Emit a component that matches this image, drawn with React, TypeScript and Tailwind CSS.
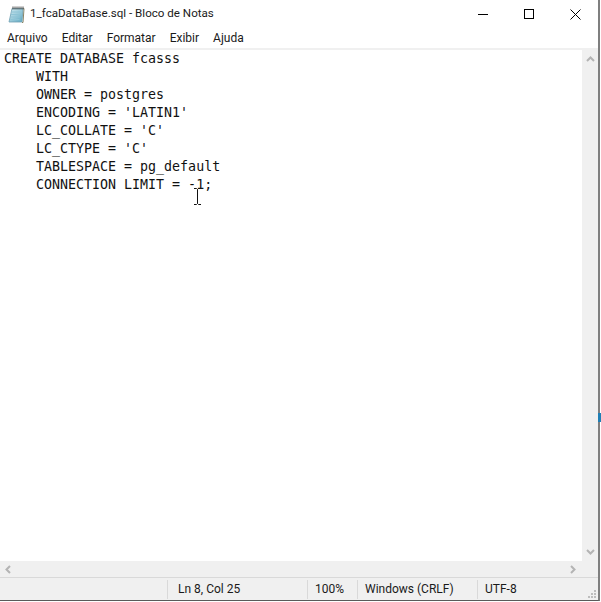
const CODE = [
  "CREATE DATABASE fcasss",
  "    WITH",
  "    OWNER = postgres",
  "    ENCODING = 'LATIN1'",
  "    LC_COLLATE = 'C'",
  "    LC_CTYPE = 'C'",
  "    TABLESPACE = pg_default",
  "    CONNECTION LIMIT = -1;",
]

const MENU = ["Arquivo", "Editar", "Formatar", "Exibir", "Ajuda"]

function NotepadIcon() {
  return (
    <svg width="17" height="17" viewBox="0 0 17 17" aria-hidden="true">
      <defs>
        <linearGradient id="pad" x1="0" y1="0" x2="1" y2="1">
          <stop offset="0" stopColor="#d6edf3" />
          <stop offset="1" stopColor="#5fa9c2" />
        </linearGradient>
      </defs>
      <path d="M4.5 2.5h11.5l-1 14h-1" fill="none" stroke="#8a8464" />
      <path d="M4 2.5h11l-1 13.5H1z" fill="url(#pad)" stroke="#6f9fb2" strokeWidth="0.8" />
      <path d="M3.5 6h9M3 8.5h9M2.8 11h9M2.5 13.5h9" stroke="#8fc4d6" />
      <path d="M5 .5v3M7 .5v3M9 .5v3M11 .5v3M13 .5v3M15 .5v3" stroke="#4a4a4a" />
    </svg>
  )
}

function Chevron({ d }: { d: string }) {
  return (
    <svg width="9" height="9" viewBox="0 0 9 9" aria-hidden="true">
      <path d={d} fill="none" stroke="#b4b4b4" strokeWidth="2" />
    </svg>
  )
}

function SizeGrip() {
  return (
    <svg width="10" height="10" viewBox="0 0 10 10" aria-hidden="true">
      <path d="M7 1h2v2H7zM4 4h2v2H4zM7 4h2v2H7zM1 7h2v2H1zM4 7h2v2H4zM7 7h2v2H7z" fill="#bdbdbd" />
    </svg>
  )
}

export default function App() {
  return (
    <div className="relative h-[602px] w-[601px] overflow-hidden bg-white font-['Roboto',sans-serif] text-black">
      <div className="flex h-[601px] w-[600px] flex-col border-r-2 border-b border-r-[#7f7f7f] border-b-[#5a5a5a]">
        {/* Title bar */}
        <div className="flex h-[28px] shrink-0 items-center pl-[8px]">
          <NotepadIcon />
          <span className="ml-[5px] text-[11.6px] text-[#1a1a1a]">1_fcaDataBase.sql - Bloco de Notas</span>
          <div className="ml-auto flex items-center">
            <div className="flex h-[28px] w-[46px] items-center justify-center">
              <div className="h-px w-[10px] bg-black" />
            </div>
            <div className="flex h-[28px] w-[46px] items-center justify-center">
              <div className="size-[10px] border border-black" />
            </div>
            <div className="flex h-[28px] w-[46px] items-center justify-center">
              <svg width="11" height="11" viewBox="0 0 11 11" aria-hidden="true">
                <path d="M.5.5l10 10M10.5.5l-10 10" stroke="#000" fill="none" />
              </svg>
            </div>
          </div>
        </div>

        {/* Menu bar */}
        <div className="flex h-[20px] shrink-0 items-center gap-[14px] pl-[7px] text-[12px] text-[#1a1a1a]">
          {MENU.map((item) => (
            <span key={item}>{item}</span>
          ))}
        </div>

        {/* Editor */}
        <div className="flex min-h-0 flex-1 border-t-2 border-[#f0f0f0]">
          <pre className="min-w-0 flex-1 pl-[4px] font-['DejaVu_Sans_Mono',monospace] text-[13.3px] leading-[18px] text-[#111]">
            {CODE.join("\n")}
          </pre>
          <div className="flex w-[16px] shrink-0 flex-col items-center justify-between bg-[#f0f0f0] py-[5px]">
            <Chevron d="M1 6l3.5-3.5L8 6" />
            <Chevron d="M1 3l3.5 3.5L8 3" />
          </div>
        </div>

        {/* Horizontal scrollbar */}
        <div className="flex h-[16px] shrink-0 items-center justify-between bg-[#f0f0f0] pr-[21px] pl-[4px]">
          <Chevron d="M6 1L2.5 4.5 6 8" />
          <Chevron d="M3 1l3.5 3.5L3 8" />
        </div>

        {/* Status bar */}
        <div className="flex h-[23px] shrink-0 items-center border-t border-[#d9d9d9] bg-[#f0f0f0] pl-[167px] text-[12px] text-[#1a1a1a]">
          <div className="flex h-[19px] w-[140px] items-center border-l border-[#d9d9d9] pl-[10px]">Ln 8, Col 25</div>
          <div className="flex h-[19px] w-[50px] items-center border-l border-[#d9d9d9] pl-[7px]">100%</div>
          <div className="flex h-[19px] w-[120px] items-center border-l border-[#d9d9d9] pl-[7px]">Windows (CRLF)</div>
          <div className="flex h-[19px] flex-1 items-center border-l border-[#d9d9d9] pl-[7px]">UTF-8</div>
          <div className="mt-auto mr-[1px] mb-[1px]">
            <SizeGrip />
          </div>
        </div>
      </div>

      {/* I-beam mouse pointer over the text */}
      <svg className="absolute top-[188px] left-[193px]" width="9" height="17" viewBox="0 0 9 17" aria-hidden="true">
        <path d="M1 .5h2.5l1 1 1-1H8M4.5 1.5v14M1 16.5h2.5l1-1 1 1H8" fill="none" stroke="#111" />
      </svg>

      {/* Sliver of the window behind */}
      <div className="absolute top-[413px] left-[598px] h-[9px] w-[3px] bg-[#1f7fb5]" />
    </div>
  )
}
